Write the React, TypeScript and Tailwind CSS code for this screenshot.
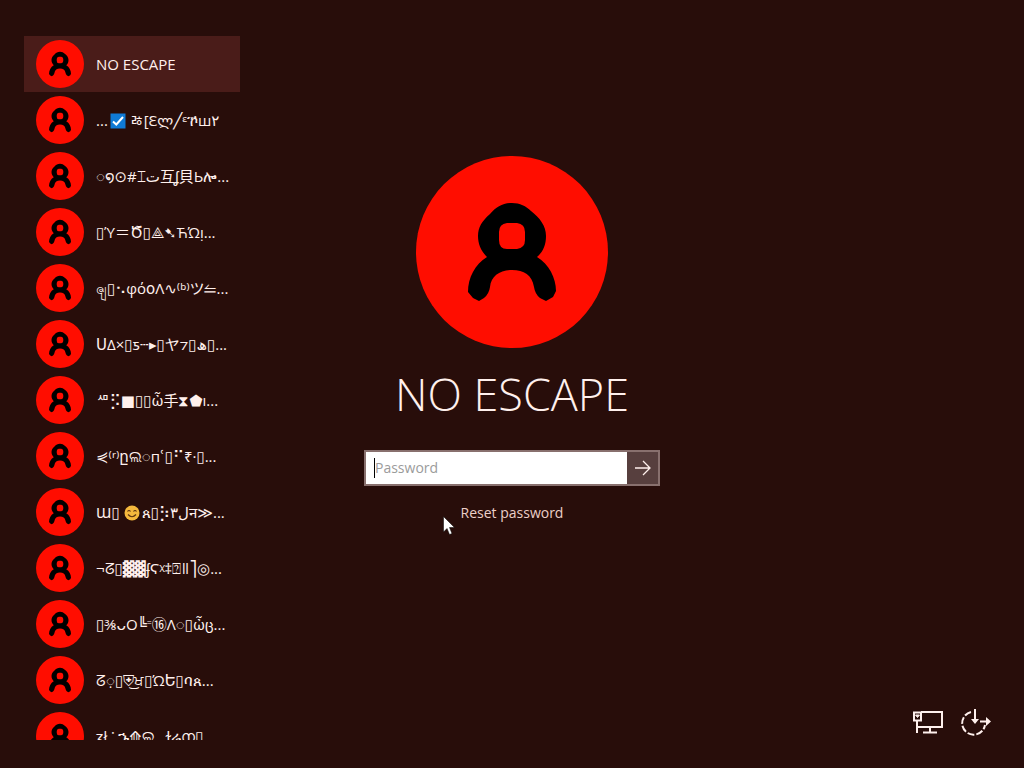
import type { ReactNode } from "react";

const FONT =
  "font-['Open_Sans','Noto_Sans','DejaVu_Sans','Noto_Sans_CJK_JP',sans-serif]";

function Avatar({ className }: { className: string }) {
  return (
    <svg viewBox="0 0 192 192" className={`shrink-0 ${className}`} aria-hidden="true">
      <circle cx="96" cy="96" r="96" fill="#ff0d00" />
      <path
        fillRule="evenodd"
        fill="#000"
        d="M96 47C104 47 110 50 115 55C124 62 130 70 130 80C130 89 127 96 121 101C133 108 140 122 140 135L137 141L130 145L124 142Q119 138 118 131C116 119 108 114 96 114C84 114 75 120 74 131Q73 138 68 142L63 145L57 142L52 136C52 122 59 108 71 101C65 95 62 88 62 80C62 71 66 65 74 58C80 51 87 47 96 47ZM91 67Q83 68 83 76V84Q83 93 91 93H101Q109 92 109 84V76Q109 68 101 67Z"
      />
    </svg>
  );
}

function CheckEmoji() {
  return (
    <svg viewBox="0 0 16 16" className="mr-1 ml-0.5 inline size-4 align-[-3px]" aria-label="checked">
      <rect x="0.5" y="0.5" width="15" height="15" fill="#0f7ad6" />
      <path d="M3 8.5 6.3 11.5 13 4" fill="none" stroke="#fff" strokeWidth="2" />
    </svg>
  );
}

function SmileEmoji() {
  return (
    <svg viewBox="0 0 16 16" className="mr-0.5 ml-1 inline size-4 align-[-3px]" aria-label="smile">
      <circle cx="8" cy="8" r="7.5" fill="#f5b83d" />
      <path
        d="M3.5 6.5Q5 4.500 6.500 6.500M9.500 6.500Q11 4.500 12.500 6.500M4 9.500Q8 14 12 9.500"
        fill="none"
        stroke="#5c3310"
        strokeWidth="1.200"
      />
    </svg>
  );
}

const users: ReactNode[] = [
  "NO ESCAPE",
  <>...<CheckEmoji />ㅀ[Ԑლ╱ᵋኾш۲</>,
  "◌໑⊙#⌶ت互ʆ貝Ьሎ...",
  "▯Ύ＝Ծ̆▯⟁➷ЋΏı̣...",
  "ၛ▯⠢φόօΛ∿⁽ᵇ⁾ツ⥪...",
  "ՍΔ×▯ƽ┄▸▯ヤ⁊▯ھ▯...",
  "ᄱ⡫■▯▯ὦ手⧗⬟ı...",
  "⋞⁽ʳ⁾ըଲ◌пՙ▯⠋₹·▯...",
  <>Ɯ▯<SmileEmoji />ጰ▯⡳٣لन≫...</>,
  "¬ᘔ▯▓▓ʄϚᵡ‡⍰ǁ⎤◎...",
  "▯⅜ᴗО╚⁼⑯Λ◌▯ὦც...",
  "ᘔ◌̣▯⛨͜ਖ▯ΏԵ▯ባጰ...",
  "ʓł ⁚ ኁ⟰ଲ˷ ɫሬന▯",
];

function NetworkIcon() {
  return (
    <svg viewBox="0 0 32 28" className="h-7 w-8" fill="none" stroke="currentColor" strokeWidth="2" aria-hidden="true">
      <path d="M9 4H30V19H6M5 13V25M18 19V24M11 24.500H25" />
      <path d="M2 4.500H9V12.500H2Z" />
      <path d="M3.500 7 5.500 9.500 7.500 7Z" fill="currentColor" strokeWidth="1" />
    </svg>
  );
}

function EaseIcon() {
  return (
    <svg viewBox="0 0 32 28" className="h-7 w-8" fill="none" stroke="currentColor" strokeWidth="2" aria-hidden="true">
      <path d="M11 4A11.500 11.500 0 1 0 25 17" strokeDasharray="7 2" />
      <path d="M15 1V13M20 13.500H28" />
      <path d="M11 11H19L15 16ZM26 9 31 13.500 26 18Z" fill="currentColor" stroke="none" />
    </svg>
  );
}

export default function App() {
  return (
    <div
      className={`grid h-screen grid-cols-[216px_1fr_216px] overflow-hidden bg-[#280d0a] px-6 pt-9 pb-7 text-[#fff0ed] ${FONT}`}
    >
      <nav className="min-h-0 overflow-hidden" aria-label="Users">
        <ul>
          {users.map((name, i) => (
            <li key={i}>
              <button
                type="button"
                className={`flex h-14 w-full items-center gap-3 pl-3 text-left text-[15px] leading-6 ${i === 0 ? "bg-[#4a1c19]" : ""}`}
              >
                <Avatar className="size-12" />
                <span className="whitespace-nowrap [unicode-bidi:bidi-override]">{name}</span>
              </button>
            </li>
          ))}
        </ul>
      </nav>

      <main className="flex flex-col items-center pt-[120px]">
        <Avatar className="size-48" />
        <h1 className="mt-3 text-[45px] leading-[68px] font-light whitespace-nowrap">NO ESCAPE</h1>
        <form className="mt-[22px] flex h-9 w-[296px] border-2 border-[#88706e]" onSubmit={(e) => e.preventDefault()}>
          <div className="flex min-w-0 flex-1 items-center bg-white pl-2">
            <span className="h-5 w-px bg-black" />
            <input
              type="password"
              aria-label="Password"
              placeholder="Password"
              className="w-full min-w-0 bg-transparent text-sm text-black outline-none placeholder:text-[#9b9b9b]"
            />
          </div>
          <button type="submit" aria-label="Submit" className="flex w-[31px] items-center justify-center bg-[#573f3e]">
            <svg viewBox="0 0 16 16" className="size-4" fill="none" stroke="currentColor" strokeWidth="1.300" aria-hidden="true">
              <path d="M0 8H15M8 1 15 8 8 15" />
            </svg>
          </button>
        </form>
        <a href="#reset" className="mt-4 text-sm leading-[22px] text-[#eccfc8]">
          Reset password
        </a>
      </main>

      <div className="flex items-end justify-end gap-4 pr-2 pb-1">
        <button type="button" aria-label="Network">
          <NetworkIcon />
        </button>
        <button type="button" aria-label="Ease of access">
          <EaseIcon />
        </button>
      </div>

      <svg viewBox="0 0 12 19" className="pointer-events-none absolute top-[516px] left-[443px] h-[19px] w-3" aria-hidden="true">
        <path d="M0.500 0.500V16L4 12.500 6.500 18.500 9 17.500 6.500 11.500H11.500Z" fill="#fff" stroke="#000" strokeWidth="0.500" />
      </svg>
    </div>
  );
}
